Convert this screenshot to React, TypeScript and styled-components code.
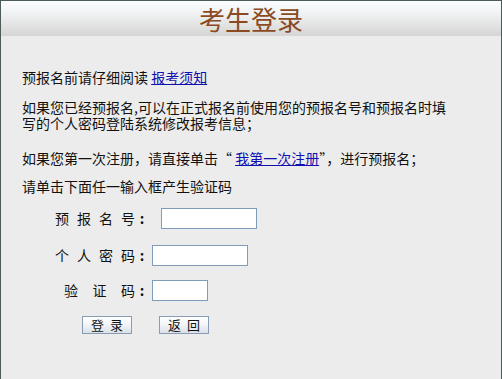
import React from "react";
import styled, { createGlobalStyle } from "styled-components";

const GlobalStyle = createGlobalStyle`
  html, body {
    margin: 0;
    padding: 0;
    background: #ececec;
  }
  body {
    font-family: "Noto Sans CJK SC", "Noto Sans", sans-serif;
  }
`;

const Frame = styled.div`
  box-sizing: border-box;
  min-height: 100vh;
  border: 1px solid #4b5a5a;
  border-bottom: none;
  background: #ececec;
  color: #111;
`;

const Header = styled.div`
  height: 35px;
  display: flex;
  align-items: center;
  justify-content: center;
  background: linear-gradient(to bottom, #fbfcfd 0%, #f1f2f3 35%, #d5d5d5 100%);
`;

const Title = styled.h1`
  margin: 0;
  font-size: 26px;
  line-height: 35px;
  font-weight: 400;
  color: #8b4a1f;
`;

const Content = styled.div`
  padding: 0 20px 0 21px;
`;

const Paragraph = styled.p<{ $top: number }>`
  margin: ${(p) => p.$top}px 0 0;
  font-size: 14px;
  line-height: 16px;
  color: #111;
  white-space: nowrap;
`;

const Link = styled.a`
  color: #1010b0;
  text-decoration: underline;
  cursor: pointer;
`;

const FormRow = styled.div<{ $top: number }>`
  display: flex;
  align-items: center;
  height: 21px;
  margin-top: ${(p) => p.$top}px;
`;

const Label = styled.div`
  width: 127px;
  display: flex;
  justify-content: flex-end;
  font-size: 14px;
  line-height: 21px;
  color: #111;
`;

const LabelChars = styled.span<{ $gap: number }>`
  display: flex;
  gap: ${(p) => p.$gap}px;
`;

const Colon = styled.span`
  display: inline-block;
  width: 14px;
  text-align: center;
  font-weight: 700;
`;

const TextInput = styled.input<{ $width: number; $gap: number }>`
  box-sizing: border-box;
  width: ${(p) => p.$width}px;
  height: 21px;
  margin: 0 0 0 ${(p) => p.$gap}px;
  padding: 0 2px;
  border: 1px solid #7f9db9;
  background: #fff;
  outline: none;
`;

const ButtonRow = styled.div`
  display: flex;
  gap: 27px;
  margin: 15px 0 0 60px;
`;

const Button = styled.button`
  box-sizing: border-box;
  width: 50px;
  height: 18px;
  padding: 0 0 0 6px;
  border: 1px solid #8a9cb3;
  background: linear-gradient(to bottom, #ffffff 0%, #f1f4f8 50%, #d9e0e8 100%);
  font-family: "Noto Sans CJK SC", sans-serif;
  font-size: 13px;
  line-height: 16px;
  letter-spacing: 6px;
  color: #111;
  cursor: pointer;
`;

function FieldLabel({ text, gap }: { text: string; gap: number }) {
  return (
    <Label>
      <LabelChars $gap={gap}>
        {Array.from(text).map((c, i) => (
          <span key={i}>{c}</span>
        ))}
      </LabelChars>
      <Colon>:</Colon>
    </Label>
  );
}

export default function App() {
  return (
    <>
      <GlobalStyle />
      <Frame>
        <Header>
          <Title>考生登录</Title>
        </Header>
        <Content>
          <Paragraph $top={33}>
            预报名前请仔细阅读 <Link>报考须知</Link>
          </Paragraph>
          <Paragraph $top={14}>
            如果您已经预报名,可以在正式报名前使用您的预报名号和预报名时填
            <br />
            写的个人密码登陆系统修改报考信息；
          </Paragraph>
          <Paragraph $top={19}>
            如果您第一次注册，请直接单击“ <Link>我第一次注册</Link>”，进行预报名；
          </Paragraph>
          <Paragraph $top={12}>请单击下面任一输入框产生验证码</Paragraph>

          <FormRow $top={14}>
            <FieldLabel text="预报名号" gap={8} />
            <TextInput type="text" $width={96} $gap={12} />
          </FormRow>
          <FormRow $top={16}>
            <FieldLabel text="个人密码" gap={8} />
            <TextInput type="password" $width={96} $gap={3} />
          </FormRow>
          <FormRow $top={14}>
            <FieldLabel text="验证码" gap={14.5} />
            <TextInput type="text" $width={56} $gap={3} />
          </FormRow>

          <ButtonRow>
            <Button type="button">登录</Button>
            <Button type="button">返回</Button>
          </ButtonRow>
        </Content>
      </Frame>
    </>
  );
}
